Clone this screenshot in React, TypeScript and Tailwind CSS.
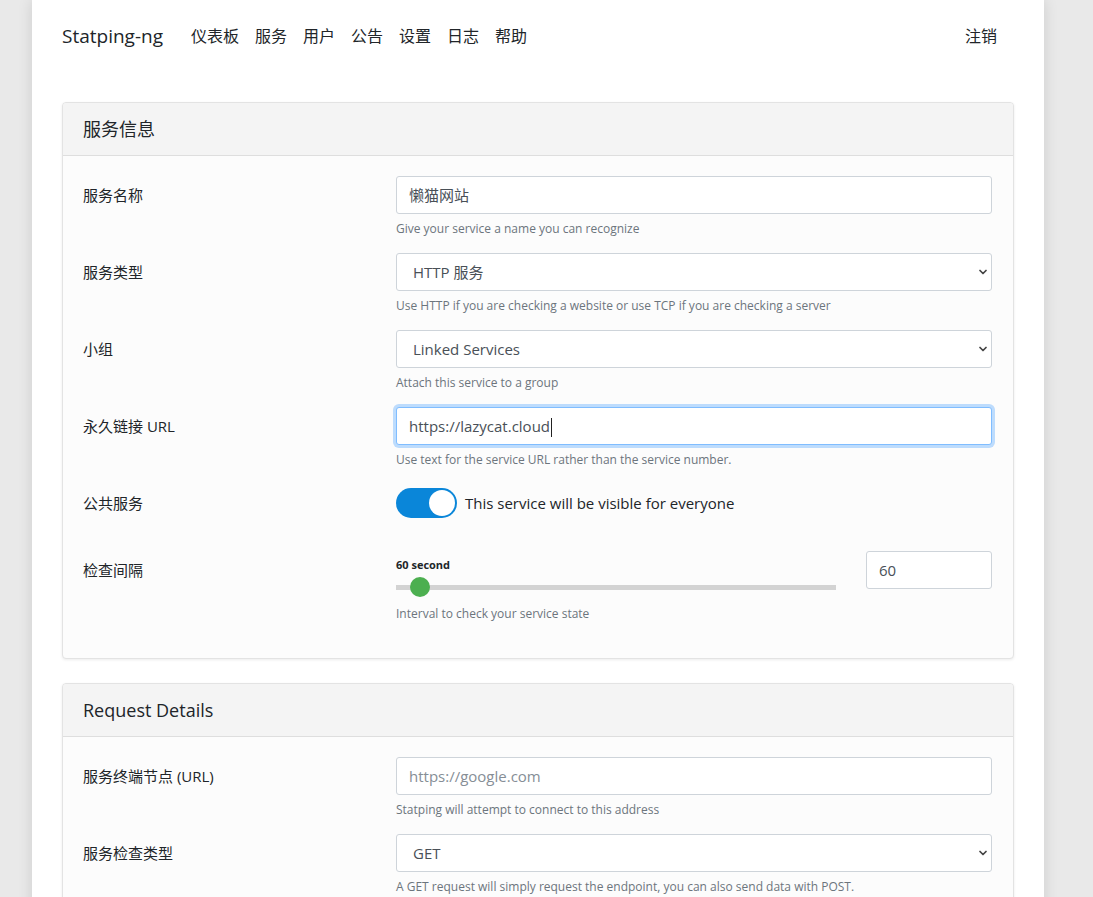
import { ChevronDown } from "lucide-react";

const font = { fontFamily: '"Open Sans", "Noto Sans CJK SC", sans-serif' };

function TextBox({ value, placeholder, focused }: { value?: string; placeholder?: string; focused?: boolean }) {
	return (
		<div
			className={
				"h-[38px] rounded-[3px] border bg-white px-3 flex items-center text-[15px] " +
				(focused
					? "border-[#80bdff] shadow-[0_0_0_3px_rgba(0,123,255,0.25)]"
					: "border-[#ced4da]")
			}
		>
			{value ? (
				<span className="text-[#495057]">
					{value}
					{focused && <span className="inline-block w-px h-[19px] bg-[#222] align-middle ml-px" />}
				</span>
			) : (
				<span className="text-[#868e96]">{placeholder}</span>
			)}
		</div>
	);
}

function SelectBox({ value }: { value: string }) {
	return (
		<div className="h-[38px] rounded-[3px] border border-[#ced4da] bg-white pl-4 pr-[2px] flex items-center justify-between text-[15px] text-[#495057]">
			<span>{value}</span>
			<ChevronDown size={12} strokeWidth={3.5} className="text-[#444]" />
		</div>
	);
}

function Help({ children }: { children: React.ReactNode }) {
	return <div className="mt-[6px] text-[12px] leading-[18px] text-[#6c757d]">{children}</div>;
}

function Row({ label, children, className }: { label: string; children: React.ReactNode; className?: string }) {
	return (
		<div className={"flex " + (className ?? "mb-[15px]")}>
			<div className="w-[313px] pt-[7px] text-[15px] leading-6 text-[#212529]">{label}</div>
			<div className="flex-1 pr-px">{children}</div>
		</div>
	);
}

function Card({ title, children, className }: { title: string; children: React.ReactNode; className?: string }) {
	return (
		<div className={"rounded-[4px] border border-[#e3e3e3] bg-[#fcfcfc] shadow-[0_1px_3px_rgba(0,0,0,0.08)] " + (className ?? "")}>
			<div className="h-[53px] border-b border-[#dedede] bg-[#f4f4f4] rounded-t-[4px] px-5 flex items-center text-[18px] text-[#212529]">
				{title}
			</div>
			<div className="px-5 pt-5 pb-5">{children}</div>
		</div>
	);
}

export default function App() {
	return (
		<div style={font} className="min-h-[897px] bg-[#e9e9e9] overflow-hidden">
			<div className="ml-[32px] w-[1012px] min-h-[897px] bg-white px-[30px] shadow-[0_0_14px_rgba(0,0,0,0.12)]">
				<nav className="h-[72px] flex items-center text-[#212529]">
					<span className="text-[19px] mr-[28px]">Statping-ng</span>
					<div className="flex gap-4 text-[16px]">
						<span>仪表板</span>
						<span>服务</span>
						<span>用户</span>
						<span>公告</span>
						<span>设置</span>
						<span>日志</span>
						<span>帮助</span>
					</div>
					<span className="ml-auto mr-[17px] text-[16px]">注销</span>
				</nav>

				<div className="pt-[30px]">
					<Card title="服务信息">
						<Row label="服务名称">
							<TextBox value="懒猫网站" />
							<Help>Give your service a name you can recognize</Help>
						</Row>
						<Row label="服务类型">
							<SelectBox value="HTTP 服务" />
							<Help>Use HTTP if you are checking a website or use TCP if you are checking a server</Help>
						</Row>
						<Row label="小组">
							<SelectBox value="Linked Services" />
							<Help>Attach this service to a group</Help>
						</Row>
						<Row label="永久链接 URL">
							<TextBox value="https://lazycat.cloud" focused />
							<Help>Use text for the service URL rather than the service number.</Help>
						</Row>
						<Row label="公共服务" className="h-[51px] mb-4">
							<div className="flex items-center gap-2 pt-[4px]">
								<div className="w-[61px] h-[30px] rounded-full bg-[#0a86d9] flex items-center justify-end pr-[2px]">
									<div className="w-[26px] h-[26px] rounded-full bg-white" />
								</div>
								<span className="text-[15px] text-[#212529]">This service will be visible for everyone</span>
							</div>
						</Row>
						<Row label="检查间隔" className="mb-[15px]">
							<div className="flex gap-[30px]">
								<div className="w-[440px]">
									<div className="pt-[5px] text-[11px] font-bold leading-[18px] text-[#212529]">60 second</div>
									<div className="relative mt-[3px] h-[20px] flex items-center">
										<div className="h-[5px] w-full bg-[#d3d3d3]" />
										<div className="absolute left-[14px] top-0 w-[20px] h-[20px] rounded-full bg-[#4caf50]" />
									</div>
									<div className="mt-[8px] text-[12px] leading-[18px] text-[#6c757d]">Interval to check your service state</div>
								</div>
								<div className="flex-1">
									<TextBox value="60" />
								</div>
							</div>
						</Row>
					</Card>

					<Card title="Request Details" className="mt-[24px]">
						<Row label="服务终端节点 (URL)">
							<TextBox placeholder="https://google.com" />
							<Help>Statping will attempt to connect to this address</Help>
						</Row>
						<Row label="服务检查类型">
							<SelectBox value="GET" />
							<Help>A GET request will simply request the endpoint, you can also send data with POST.</Help>
						</Row>
					</Card>
				</div>
			</div>
		</div>
	);
}
